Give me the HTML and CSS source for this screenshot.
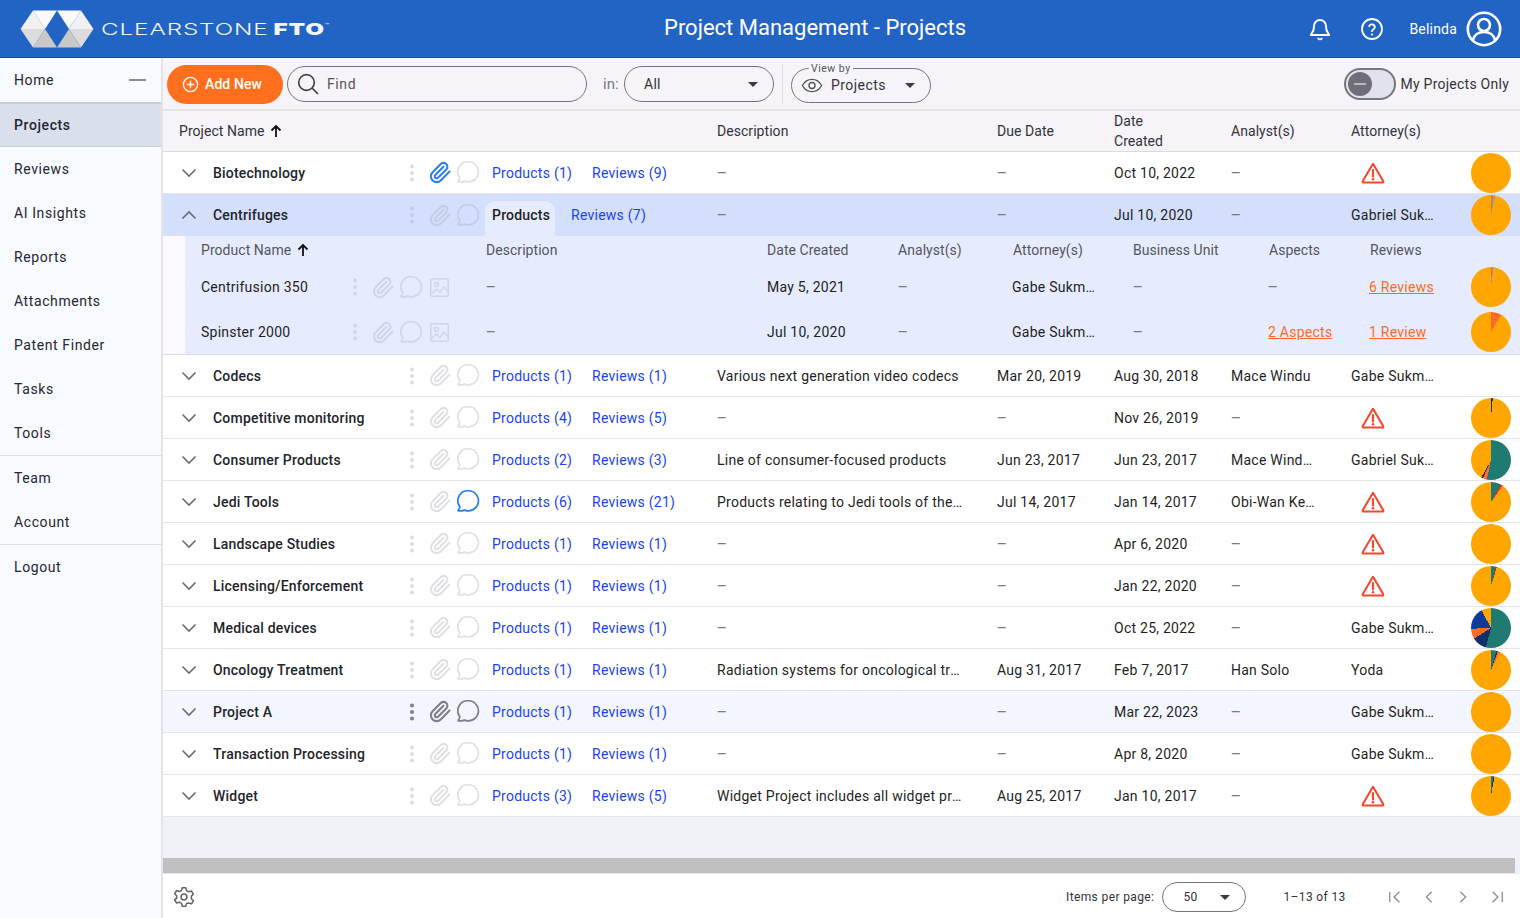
FILE: index.html
```html
<!DOCTYPE html>
<html lang="en">
<head>
<meta charset="utf-8">
<title>Project Management - Projects</title>
<link rel="stylesheet" href="styles.css">
</head>
<body>
<svg class="defs" aria-hidden="true">
  <symbol id="clip" viewBox="0 0 24 24"><path d="M21.44 11.05l-9.19 9.19a6 6 0 0 1-8.49-8.49l8.57-8.57A4 4 0 1 1 18 8.84l-8.59 8.57a2 2 0 0 1-2.83-2.83l8.49-8.48" fill="none" stroke="currentColor" stroke-width="2.200" stroke-linecap="round" stroke-linejoin="round"/></symbol>
  <symbol id="chat" viewBox="1.500 1.500 22 22"><path d="M12.500 2.200a9.600 9.600 0 1 1-3.700 18.500c-1.800.7-3.700.9-5.600.8-.6 0-.8-.5-.4-.9.8-.9 1.300-1.900 1.400-3.100A9.600 9.600 0 0 1 12.500 2.200z" fill="none" stroke="currentColor" stroke-width="1.700" stroke-linejoin="round"/></symbol>
  <symbol id="pic" viewBox="0 0 24 24"><rect x="2" y="2" width="20" height="20" rx="1.500" fill="none" stroke="currentColor" stroke-width="1.800"/><circle cx="8.500" cy="8.500" r="2.300" fill="none" stroke="currentColor" stroke-width="1.700"/><path d="M2.500 19l6-5 4 3.500 4.500-6 4.500 5" fill="none" stroke="currentColor" stroke-width="1.700"/></symbol>
  <symbol id="warn" viewBox="0 0 24 24"><path d="M12 2.800L1.700 20.300c-.3.6.1 1.200.7 1.200h19.200c.6 0 1-.6.7-1.200z" fill="none" stroke="currentColor" stroke-width="2.100" stroke-linejoin="round"/><path d="M12 9v6.500" stroke="currentColor" stroke-width="2.200" stroke-linecap="round"/><circle cx="12" cy="18.300" r="1.300" fill="currentColor"/></symbol>
  <symbol id="down" viewBox="0 0 16 10"><path d="M1.500 1.500L8 8l6.500-6.500" fill="none" stroke="currentColor" stroke-width="1.600"/></symbol>
  <symbol id="up" viewBox="0 0 16 10"><path d="M1.500 8.500L8 2l6.500 6.500" fill="none" stroke="currentColor" stroke-width="1.600"/></symbol>
  <symbol id="arrow" viewBox="0 0 12 14"><path d="M6 13V2M1.500 6.500L6 2l4.500 4.500" fill="none" stroke="currentColor" stroke-width="1.800"/></symbol>
  <symbol id="dots" viewBox="0 0 4 18"><circle cx="2" cy="2.500" r="2" fill="currentColor"/><circle cx="2" cy="9" r="2" fill="currentColor"/><circle cx="2" cy="15.500" r="2" fill="currentColor"/></symbol>
  <symbol id="caret" viewBox="0 0 10 5"><path d="M0 0h10L5 5z" fill="currentColor"/></symbol>
</svg>

<header class="topbar">
  <div class="brand">
    <svg class="logo" viewBox="0 0 74 38" aria-hidden="true">
      <path d="M.5 19L13 .5 25 19z" fill="#f1f1f3"/>
      <path d="M13 .5h24L25 19z" fill="#fafafb"/>
      <path d="M.5 19H25L13 37.500z" fill="#dcdcde"/>
      <path d="M25 19l12 18.500H13z" fill="#c9c8c8"/>
      <path d="M73.500 19L61 .5 49 19z" fill="#f1f1f3"/>
      <path d="M61 .5H37L49 19z" fill="#fafafb"/>
      <path d="M73.500 19H49l12 18.500z" fill="#dcdcde"/>
      <path d="M49 19L37 37.500h24z" fill="#c9c8c8"/>
    </svg>
    <span class="wordmark"><span class="wm-light">CLEARSTONE</span> <b class="wm-bold">FTO</b><sup class="wm-tm">™</sup></span>
  </div>
  <h1 class="title">Project Management - Projects</h1>
  <div class="top-actions">
    <svg class="top-ico" viewBox="0 0 24 24"><path d="M18 9a6 6 0 0 0-12 0c0 6-2.500 8-3.300 9h18.600c-.8-1-3.300-3-3.300-9z" fill="none" stroke="#fff" stroke-width="1.800" stroke-linejoin="round"/><path d="M10.300 21.500a2 2 0 0 0 3.400 0" fill="none" stroke="#fff" stroke-width="1.800" stroke-linecap="round"/></svg>
    <svg class="top-ico help" viewBox="0 0 24 24"><circle cx="12" cy="12" r="10" fill="none" stroke="#fff" stroke-width="1.800"/><path d="M9.200 9.200a2.900 2.900 0 0 1 5.600 1c0 1.900-2.800 2.400-2.800 4" fill="none" stroke="#fff" stroke-width="1.800" stroke-linecap="round"/><circle cx="12" cy="17.500" r="1.100" fill="#fff"/></svg>
    <span class="user">Belinda</span>
    <svg class="avatar" viewBox="0 0 36 36"><circle cx="18" cy="18" r="16.200" fill="none" stroke="#fff" stroke-width="2.600"/><circle cx="18" cy="14" r="6" fill="none" stroke="#fff" stroke-width="2.600"/><path d="M7 29c1-5 5.500-8 11-8s10 3 11 8" fill="none" stroke="#fff" stroke-width="2.600"/></svg>
  </div>
</header>

<div class="shell">
  <nav class="side">
    <a class="nav nav-home">Home<span class="nav-minus"></span></a>
    <a class="nav nav-active">Projects</a>
    <a class="nav">Reviews</a>
    <a class="nav">AI Insights</a>
    <a class="nav">Reports</a>
    <a class="nav">Attachments</a>
    <a class="nav">Patent Finder</a>
    <a class="nav">Tasks</a>
    <a class="nav nav-end">Tools</a>
    <a class="nav">Team</a>
    <a class="nav nav-end">Account</a>
    <a class="nav">Logout</a>
  </nav>

  <main class="main">
    <div class="toolbar">
      <button class="add"><svg class="add-ico" viewBox="0 0 18 18"><circle cx="9" cy="9" r="7.500" fill="none" stroke="#fff" stroke-width="1.400"/><path d="M9 5v8M5 9h8" stroke="#fff" stroke-width="1.400"/></svg>Add New</button>
      <div class="find"><svg class="find-ico" viewBox="0 0 22 22"><circle cx="9.500" cy="9.500" r="7.800" fill="none" stroke="#444" stroke-width="1.700"/><path d="M15 15l6 6" stroke="#444" stroke-width="1.700"/></svg><span>Find</span></div>
      <span class="in">in:</span>
      <div class="select sel-all"><span>All</span><svg class="caret"><use href="#caret"/></svg></div>
      <span class="vsep"></span>
      <div class="select sel-view">
        <span class="legend">View by</span>
        <svg class="eye" viewBox="0 0 24 16"><path d="M1.500 8C4 3.500 8 1.300 12 1.300S20 3.500 22.500 8C20 12.500 16 14.700 12 14.700S4 12.500 1.500 8z" fill="none" stroke="#555" stroke-width="1.500"/><circle cx="12" cy="8" r="3.300" fill="none" stroke="#555" stroke-width="1.500"/></svg>
        <span>Projects</span><svg class="caret"><use href="#caret"/></svg>
      </div>
      <div class="only">
        <span class="toggle"><span class="knob"></span></span>
        <span>My Projects Only</span>
      </div>
    </div>

    <div class="table">
      <div class="row head">
        <div></div><div class="c-headname">Project Name <svg class="sort"><use href="#arrow"/></svg></div>
        <div>Description</div><div>Due Date</div><div class="two">Date Created</div><div>Analyst(s)</div><div>Attorney(s)</div><div></div>
      </div>

      <div class="row">
        <svg class="chev"><use href="#down"/></svg><div class="name">Biotechnology</div><svg class="dots"><use href="#dots"/></svg>
        <div class="icons"><svg class="ico on"><use href="#clip"/></svg><svg class="ico"><use href="#chat"/></svg></div>
        <a class="link">Products (1)</a><a class="link">Reviews (9)</a>
        <div class="dash">—</div><div class="dash">—</div><div>Oct 10, 2022</div><div class="dash">—</div>
        <div><svg class="warn"><use href="#warn"/></svg></div>
        <div class="pie" style="background:#ffa600"></div>
      </div>

      <div class="row open">
        <svg class="chev"><use href="#up"/></svg><div class="name">Centrifuges</div><svg class="dots"><use href="#dots"/></svg>
        <div class="icons"><svg class="ico"><use href="#clip"/></svg><svg class="ico"><use href="#chat"/></svg></div>
        <div class="tabs"><span class="tab">Products</span><a class="link">Reviews (7)</a></div>
        <div class="dash">—</div><div class="dash">—</div><div>Jul 10, 2020</div><div class="dash">—</div>
        <div class="cut">Gabriel Sukman</div>
        <div class="pie" style="background:conic-gradient(#ff6a28 0 5deg,#9a96a0 5deg 12deg,#ffa600 12deg)"></div>
      </div>

      <div class="sub">
        <div class="sub-inner">
          <div class="subrow subhead">
            <div class="s-headname">Product Name <svg class="sort"><use href="#arrow"/></svg></div>
            <div>Description</div><div>Date Created</div><div>Analyst(s)</div><div>Attorney(s)</div><div>Business Unit</div><div>Aspects</div><div>Reviews</div><div></div>
          </div>
          <div class="subrow sr1">
            <div class="s-name">Centrifusion 350</div><svg class="dots"><use href="#dots"/></svg>
            <div class="s-icons"><svg class="ico"><use href="#clip"/></svg><svg class="ico"><use href="#chat"/></svg><svg class="ico pic"><use href="#pic"/></svg></div>
            <div class="dash">—</div><div>May 5, 2021</div><div class="dash">—</div><div class="cut">Gabe Sukman</div><div class="dash">—</div><div class="dash">—</div><a class="olink">6 Reviews</a>
            <div class="pie" style="background:conic-gradient(#ff6a28 0 3deg,#9a96a0 3deg 8deg,#ffa600 8deg)"></div>
          </div>
          <div class="subrow sr2">
            <div class="s-name">Spinster 2000</div><svg class="dots"><use href="#dots"/></svg>
            <div class="s-icons"><svg class="ico"><use href="#clip"/></svg><svg class="ico"><use href="#chat"/></svg><svg class="ico pic"><use href="#pic"/></svg></div>
            <div class="dash">—</div><div>Jul 10, 2020</div><div class="dash">—</div><div class="cut">Gabe Sukman</div><div class="dash">—</div><a class="olink">2 Aspects</a><a class="olink">1 Review</a>
            <div class="pie" style="background:conic-gradient(#ff6a28 0 30deg,#ffa600 30deg)"></div>
          </div>
        </div>
      </div>

      <div class="row">
        <svg class="chev"><use href="#down"/></svg><div class="name">Codecs</div><svg class="dots"><use href="#dots"/></svg>
        <div class="icons"><svg class="ico"><use href="#clip"/></svg><svg class="ico"><use href="#chat"/></svg></div>
        <a class="link">Products (1)</a><a class="link">Reviews (1)</a>
        <div class="desc">Various next generation video codecs</div><div>Mar 20, 2019</div><div>Aug 30, 2018</div><div class="cut-a">Mace Windu</div><div class="cut">Gabe Sukman</div><div></div>
      </div>

      <div class="row">
        <svg class="chev"><use href="#down"/></svg><div class="name">Competitive monitoring</div><svg class="dots"><use href="#dots"/></svg>
        <div class="icons"><svg class="ico"><use href="#clip"/></svg><svg class="ico"><use href="#chat"/></svg></div>
        <a class="link">Products (4)</a><a class="link">Reviews (5)</a>
        <div class="dash">—</div><div class="dash">—</div><div>Nov 26, 2019</div><div class="dash">—</div>
        <div><svg class="warn"><use href="#warn"/></svg></div>
        <div class="pie" style="background:conic-gradient(#1a2f6d 0 5deg,#ffa600 5deg)"></div>
      </div>

      <div class="row">
        <svg class="chev"><use href="#down"/></svg><div class="name">Consumer Products</div><svg class="dots"><use href="#dots"/></svg>
        <div class="icons"><svg class="ico"><use href="#clip"/></svg><svg class="ico"><use href="#chat"/></svg></div>
        <a class="link">Products (2)</a><a class="link">Reviews (3)</a>
        <div class="desc">Line of consumer-focused products</div><div>Jun 23, 2017</div><div>Jun 23, 2017</div><div class="cut-a">Mace Windu Jr</div><div class="cut">Gabriel Sukman</div>
        <div class="pie" style="background:conic-gradient(#1f7a72 0 192deg,#ff6a28 192deg 204deg,#1a2f6d 204deg 209deg,#ffa600 209deg)"></div>
      </div>

      <div class="row">
        <svg class="chev"><use href="#down"/></svg><div class="name">Jedi Tools</div><svg class="dots"><use href="#dots"/></svg>
        <div class="icons"><svg class="ico"><use href="#clip"/></svg><svg class="ico on"><use href="#chat"/></svg></div>
        <a class="link">Products (6)</a><a class="link">Reviews (21)</a>
        <div class="desc">Products relating to Jedi tools of the Republic</div><div>Jul 14, 2017</div><div>Jan 14, 2017</div><div class="cut-a">Obi-Wan Kenobi</div>
        <div><svg class="warn"><use href="#warn"/></svg></div>
        <div class="pie" style="background:conic-gradient(#1f7a72 0 28deg,#b5321c 28deg 33deg,#ff6a28 33deg 38deg,#ffa600 38deg)"></div>
      </div>

      <div class="row">
        <svg class="chev"><use href="#down"/></svg><div class="name">Landscape Studies</div><svg class="dots"><use href="#dots"/></svg>
        <div class="icons"><svg class="ico"><use href="#clip"/></svg><svg class="ico"><use href="#chat"/></svg></div>
        <a class="link">Products (1)</a><a class="link">Reviews (1)</a>
        <div class="dash">—</div><div class="dash">—</div><div>Apr 6, 2020</div><div class="dash">—</div>
        <div><svg class="warn"><use href="#warn"/></svg></div>
        <div class="pie" style="background:conic-gradient(#b08a40 0 1.500deg,#ffa600 1.500deg)"></div>
      </div>

      <div class="row">
        <svg class="chev"><use href="#down"/></svg><div class="name">Licensing/Enforcement</div><svg class="dots"><use href="#dots"/></svg>
        <div class="icons"><svg class="ico"><use href="#clip"/></svg><svg class="ico"><use href="#chat"/></svg></div>
        <a class="link">Products (1)</a><a class="link">Reviews (1)</a>
        <div class="dash">—</div><div class="dash">—</div><div>Jan 22, 2020</div><div class="dash">—</div>
        <div><svg class="warn"><use href="#warn"/></svg></div>
        <div class="pie" style="background:conic-gradient(#1f7a72 0 14deg,#b5321c 14deg 17deg,#ffa600 17deg)"></div>
      </div>

      <div class="row">
        <svg class="chev"><use href="#down"/></svg><div class="name">Medical devices</div><svg class="dots"><use href="#dots"/></svg>
        <div class="icons"><svg class="ico"><use href="#clip"/></svg><svg class="ico"><use href="#chat"/></svg></div>
        <a class="link">Products (1)</a><a class="link">Reviews (1)</a>
        <div class="dash">—</div><div class="dash">—</div><div>Oct 25, 2022</div><div class="dash">—</div>
        <div class="cut">Gabe Sukman</div>
        <div class="pie" style="background:conic-gradient(#1f7a72 0 195deg,#132f6b 195deg 238deg,#ff6a28 238deg 268deg,#10399b 268deg 332deg,#ffa600 332deg)"></div>
      </div>

      <div class="row">
        <svg class="chev"><use href="#down"/></svg><div class="name">Oncology Treatment</div><svg class="dots"><use href="#dots"/></svg>
        <div class="icons"><svg class="ico"><use href="#clip"/></svg><svg class="ico"><use href="#chat"/></svg></div>
        <a class="link">Products (1)</a><a class="link">Reviews (1)</a>
        <div class="desc">Radiation systems for oncological treatment</div><div>Aug 31, 2017</div><div>Feb 7, 2017</div><div class="cut-a">Han Solo</div><div>Yoda</div>
        <div class="pie" style="background:conic-gradient(#1f7a72 0 16deg,#1a2f6d 16deg 20deg,#ff6a28 20deg 26deg,#ffa600 26deg)"></div>
      </div>

      <div class="row hover">
        <svg class="chev"><use href="#down"/></svg><div class="name">Project A</div><svg class="dots"><use href="#dots"/></svg>
        <div class="icons"><svg class="ico"><use href="#clip"/></svg><svg class="ico"><use href="#chat"/></svg></div>
        <a class="link">Products (1)</a><a class="link">Reviews (1)</a>
        <div class="dash">—</div><div class="dash">—</div><div>Mar 22, 2023</div><div class="dash">—</div>
        <div class="cut">Gabe Sukman</div>
        <div class="pie" style="background:conic-gradient(#b08a40 0 1.500deg,#ffa600 1.500deg)"></div>
      </div>

      <div class="row">
        <svg class="chev"><use href="#down"/></svg><div class="name">Transaction Processing</div><svg class="dots"><use href="#dots"/></svg>
        <div class="icons"><svg class="ico"><use href="#clip"/></svg><svg class="ico"><use href="#chat"/></svg></div>
        <a class="link">Products (1)</a><a class="link">Reviews (1)</a>
        <div class="dash">—</div><div class="dash">—</div><div>Apr 8, 2020</div><div class="dash">—</div>
        <div class="cut">Gabe Sukman</div>
        <div class="pie" style="background:conic-gradient(#b08a40 0 1.500deg,#ffa600 1.500deg)"></div>
      </div>

      <div class="row">
        <svg class="chev"><use href="#down"/></svg><div class="name">Widget</div><svg class="dots"><use href="#dots"/></svg>
        <div class="icons"><svg class="ico"><use href="#clip"/></svg><svg class="ico"><use href="#chat"/></svg></div>
        <a class="link">Products (3)</a><a class="link">Reviews (5)</a>
        <div class="desc">Widget Project includes all widget products</div><div>Aug 25, 2017</div><div>Jan 10, 2017</div><div class="dash">—</div>
        <div><svg class="warn"><use href="#warn"/></svg></div>
        <div class="pie" style="background:conic-gradient(#1f7a72 0 6deg,#1a2f6d 6deg 10deg,#ffa600 10deg)"></div>
      </div>
    </div>

    <div class="scroll"><div class="thumb"></div></div>

    <footer class="foot">
      <svg class="gear" viewBox="0 0 24 24"><circle cx="12" cy="12" r="3.200" fill="none" stroke="#66666e" stroke-width="1.700"/><path d="M10 2h4l.7 3 2.500 1.400 3-.9 2 3.500-2.200 2.100v2.800l2.200 2.100-2 3.500-3-.9L14.700 19l-.7 3h-4l-.7-3-2.500-1.400-3 .9-2-3.500L4 13.400v-2.800L1.800 8.500l2-3.500 3 .9L9.300 5z" fill="none" stroke="#66666e" stroke-width="1.700" stroke-linejoin="round"/></svg>
      <span class="items">Items per page:</span>
      <div class="select sel-page"><span>50</span><svg class="caret"><use href="#caret"/></svg></div>
      <span class="range">1–13 of 13</span>
      <div class="pager">
        <svg viewBox="0 0 16 16"><path d="M2 2v12M13 2L7 8l6 6" fill="none" stroke="#8b8b92" stroke-width="1.500"/></svg>
        <svg viewBox="0 0 16 16"><path d="M11 2L5 8l6 6" fill="none" stroke="#8b8b92" stroke-width="1.500"/></svg>
        <svg viewBox="0 0 16 16"><path d="M5 2l6 6-6 6" fill="none" stroke="#8b8b92" stroke-width="1.500"/></svg>
        <svg viewBox="0 0 16 16"><path d="M3 2l6 6-6 6M14 2v12" fill="none" stroke="#8b8b92" stroke-width="1.500"/></svg>
      </div>
    </footer>
  </main>
</div>
</body>
</html>
```

FILE: styles.css
```css
* { box-sizing: border-box; }
html, body { height: 100%; }
body {
  margin: 0;
  height: 918px;
  overflow: hidden;
  display: flex;
  flex-direction: column;
  font-family: Roboto, "Liberation Sans", sans-serif;
  font-size: 14px;
  letter-spacing: 0.25px;
  color: #1f1f24;
  background: #fff;
}
.defs { display: none; }

/* top bar */
.topbar {
  height: 58px;
  flex: none;
  display: flex;
  align-items: center;
  background: #2264c4;
  border-bottom: 1px solid #1f4f96;
  color: #fff;
  position: relative;
}
.brand { display: flex; align-items: center; padding-left: 20px; }
.logo { width: 74px; height: 38px; display: block; }
.wordmark { margin-left: 7px; display: inline-block; transform: scaleX(1.47); transform-origin: left center; font-family: Inter, sans-serif; font-size: 16.500px; letter-spacing: 0.6px; white-space: nowrap; color: #f2f4f8; }
.wm-light { font-weight: 300; }
.wm-bold { font-weight: 900; margin-left: -2px; }
.wm-tm { font-size: 5px; vertical-align: 8px; line-height: 0; }
.title {
  position: absolute;
  left: 664px;
  top: 14px;
  margin: 0;
  font-size: 22px;
  line-height: 28px;
  font-weight: 400;
  letter-spacing: 0;
  white-space: nowrap;
}
.top-actions { margin-left: auto; display: flex; align-items: center; padding-right: 18px; }
.top-ico { width: 24px; height: 24px; }
.help { margin-left: 28px; }
.user { margin-left: 25px; font-size: 14px; letter-spacing: 0.2px; font-weight: 400; }
.avatar { width: 36px; height: 36px; margin-left: 9px; }

/* shell */
.shell { flex: 1; display: flex; min-height: 0; }
.side { width: 163px; flex: none; background: #f7faff; border-right: 2px solid #e3e3e8; display: flex; flex-direction: column; }
.nav { height: 44px; flex: none; display: flex; align-items: center; padding-left: 14px; letter-spacing: 0.6px; color: #26262c; }
.nav-home { justify-content: space-between; padding-right: 15px; }
.nav-minus { width: 17px; height: 2px; background: #8c8c93; }
.nav-active { height: 45px; background: #d9e0ec; border-top: 2px solid #c9ccd6; border-bottom: 1px solid #c9ccd6; font-weight: 500; }
.nav-end { height: 45px; padding-bottom: 1px; border-bottom: 1px solid #dcdce2; }

.main { flex: 1; min-width: 0; display: flex; flex-direction: column; }

/* toolbar */
.toolbar { height: 53px; flex: none; display: flex; align-items: center; background: #f6f4f8; border-bottom: 2px solid #e3e3e6; padding: 1px 11px 0 4px; position: relative; }
.add { width: 116px; height: 39px; border: 0; border-radius: 20px; background: #ff6f1e; color: #fff; font: 500 14px Roboto, sans-serif; letter-spacing: 0.1px; display: flex; align-items: center; gap: 6px; padding: 0 0 0 15px; }
.add-ico { width: 17px; height: 17px; }
.find { width: 300px; height: 36px; margin-left: 4px; border: 1px solid #77757c; border-radius: 18px; display: flex; align-items: center; padding-left: 9px; gap: 8px; color: #55555c; letter-spacing: 0.6px; }
.find-ico { width: 22px; height: 22px; }
.in { margin-left: 16px; width: 21px; color: #77777e; font-size: 15px; letter-spacing: 0; }
.select { display: flex; align-items: center; border: 1px solid #77757c; border-radius: 18px; color: #333339; position: relative; }
.sel-all { width: 150px; height: 36px; padding: 0 15px 0 19px; justify-content: space-between; }
.caret { width: 10px; height: 5px; color: #3a3a40; }
.vsep { width: 1px; height: 40px; background: #e0e0e4; margin: 0 8px; }
.sel-view { width: 140px; height: 35px; margin-top: 2px; padding: 0 15px 0 9px; gap: 8px; letter-spacing: 0.45px; }
.sel-view .caret { margin-left: auto; }
.legend { position: absolute; left: 17px; top: -6px; background: #f6f4f8; padding: 0 2px; font-size: 10.500px; line-height: 12px; letter-spacing: 0.5px; color: #55555c; }
.eye { width: 22px; height: 15px; }
.only { margin-left: auto; display: flex; align-items: center; gap: 4px; color: #333339; }
.toggle { width: 52px; height: 32px; border: 2px solid #77757c; border-radius: 16px; background: #e2e2ec; display: flex; align-items: center; padding-left: 2px; }
.knob { width: 24px; height: 24px; border-radius: 50%; background: #6e6d78; display: flex; align-items: center; justify-content: center; }
.knob::before { content: ""; width: 12px; height: 2px; background: #b9b8c0; }

/* table */
.table { flex: 1; background: #f1f2f8; min-height: 0; }
.row {
  height: 42px;
  display: grid;
  grid-template-columns: 50px 190px 17px 72px 100px 125px 280px 117px 117px 120px 120px 49px;
  align-items: center;
  background: #fff;
  border-bottom: 1px solid #e4e4ea;
  white-space: nowrap;
}
.head { height: 41px; background: #f6f4f8; border-bottom: 1px solid #dadade; grid-template-columns: 0 554px 280px 117px 117px 120px 120px 49px; color: #33333a; letter-spacing: 0.05px; }
.c-headname { padding-left: 16px; display: flex; align-items: center; gap: 6px; }
.two { white-space: normal; width: 60px; line-height: 20px; }
.sort { width: 12px; height: 14px; color: #111; }
.chev { width: 16px; height: 10px; justify-self: center; margin-left: 1px; color: #6a6a72; }
.name { font-weight: 500; letter-spacing: 0.2px; color: #24242a; }
.dots { width: 4px; height: 18px; justify-self: center; color: #dcdce0; }
.icons { display: flex; align-items: center; gap: 5px; padding-left: 9px; }
.ico { width: 23px; height: 23px; color: #e1e1e5; }
.ico.on { color: #2f80ed; }
.link { color: #1a44f0; }
.dash { color: #7a7a82; font-weight: 500; font-size: 12px; }
.desc, .cut, .cut-a { overflow: hidden; text-overflow: ellipsis; }
.desc { width: 248px; }
.cut { width: 84px; }
.cut-a { width: 86px; }
.warn { width: 24px; height: 24px; color: #f04a30; display: block; margin-left: 10px; }
.pie { width: 40px; height: 40px; border-radius: 50%; flex: none; }

.open { background: #d3dffb; border-bottom: 0; }
.open .dots, .open .ico { color: #c3cde8; }
.tabs { grid-column: span 2; display: flex; align-items: stretch; align-self: end; height: 35px; margin-left: -7px; }
.tab { width: 70px; padding: 0 0 7px 7px; background: #e6ecfd; border-radius: 10px 10px 0 0; display: flex; align-items: center; font-weight: 500; letter-spacing: 0.2px; }
.tabs .link { margin-left: 16px; display: flex; align-items: center; padding-bottom: 7px; }
.hover { background: #f3f6fe; }
.hover .dots, .hover .ico { color: #7f7f88; }

/* nested products */
.sub { height: 119px; padding-left: 22px; background: #fbf9fd; border-bottom: 1px solid #dcdde6; }
.sub-inner { height: 118px; background: #e6ecfd; }
.subrow {
  display: grid;
  grid-template-columns: 163px 13px 125px 281px 131px 114px 121px 135px 101px 102px 49px;
  align-items: center;
  white-space: nowrap;
}
.subhead { height: 28px; color: #55555f; letter-spacing: 0.05px; grid-template-columns: 301px 281px 131px 115px 120px 136px 101px 102px 49px; }
.s-headname { padding-left: 16px; display: flex; align-items: center; gap: 6px; }
.sr1 { height: 46px; }
.sr2 { height: 44px; }
.s-name { padding-left: 16px; }
.sub .dots { color: #d0d6ea; justify-self: start; margin-left: 5px; }
.s-icons { display: flex; align-items: center; gap: 5px; padding-left: 11px; }
.sub .ico { color: #cfd6ec; }
.sub .pic { width: 21px; height: 21px; margin-left: 1px; }
.olink { color: #ff6a28; text-decoration: underline; }

/* scrollbar + footer */
.scroll { height: 15px; flex: none; background: #f1f2f8; padding-right: 5px; }
.thumb { height: 15px; background: #c1bfc2; }
.foot { height: 45px; flex: none; background: #fff; border-top: 1px solid #e8e8ec; display: flex; align-items: center; padding: 2px 0 0 10px; font-size: 12px; letter-spacing: 0.38px; color: #333339; }
.gear { width: 22px; height: 22px; }
.items { margin-left: 871px; }
.sel-page { width: 84px; height: 30px; margin-left: 8px; padding: 0 15px 0 20px; justify-content: space-between; }
.range { margin-left: 37px; }
.pager { margin-left: 42px; display: flex; gap: 20px; }
.pager svg { width: 14px; height: 14px; }
```
